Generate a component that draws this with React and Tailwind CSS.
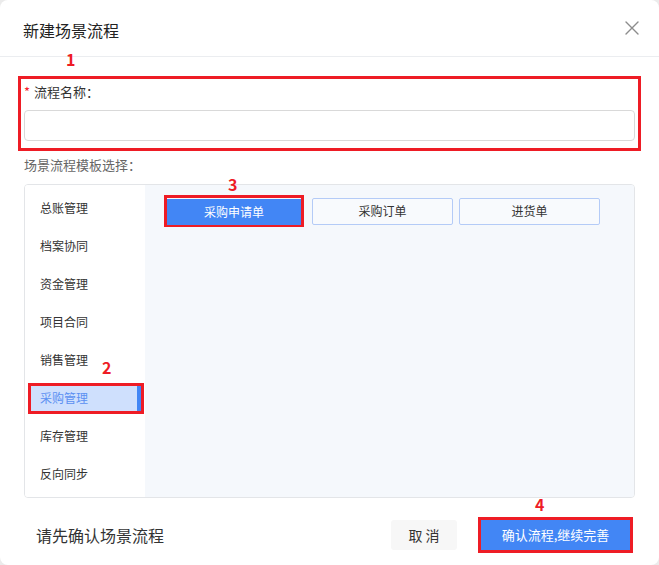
import React, { useState } from 'react';

const menus = ['总账管理', '档案协同', '资金管理', '项目合同', '销售管理', '采购管理', '库存管理', '反向同步'];
const templates = ['采购申请单', '采购订单', '进货单'];

function Mark({ n, className }) {
  return (
    <span className={`absolute text-[16px] leading-[20px] font-bold text-[#ee1c25] ${className}`}>{n}</span>
  );
}

function CloseIcon() {
  return (
    <svg width="14" height="14" viewBox="0 0 14 14" fill="none" stroke="#8c8c8c" strokeWidth="1.4" strokeLinecap="round">
      <path d="M1 1L13 13M13 1L1 13" />
    </svg>
  );
}

export default function App() {
  const [name, setName] = useState('');
  const [menu, setMenu] = useState('采购管理');
  const [tpl, setTpl] = useState('采购申请单');

  return (
    <div
      className="relative w-[659px] h-[565px] bg-[#ebebeb] text-[#333] [text-spacing-trim:space-all]"
      style={{ fontFamily: '"Noto Sans CJK SC", "Noto Sans", sans-serif' }}
    >
      <div className="flex flex-col h-full bg-white rounded-[8px] overflow-hidden">
        {/* header */}
        <div className="h-[57px] flex items-center justify-between pl-[23px] pr-[15px] border-b border-[#ebedf0]">
          <span className="text-[16px] leading-[22px] pt-[4px] text-[#222]">新建场景流程</span>
          <button className="w-[24px] h-[24px] flex items-center justify-center">
            <CloseIcon />
          </button>
        </div>

        {/* flow name */}
        <div className="mt-[19px] ml-[18px] w-[623px] border-[3px] border-[#ee1c25] pl-[3px] pr-[3px] pt-[4px] pb-[7px]">
          <div className="h-[18px] flex items-center text-[13px] leading-[18px] text-[#333]">
            <span className="text-[#f5222d] mr-[4px] text-[13px]">*</span>流程名称：
          </div>
          <input
            className="mt-[9px] w-full h-[31px] border border-[#d9d9d9] rounded-[4px] px-[10px] text-[13px] outline-none"
            value={name}
            onChange={(e) => setName(e.target.value)}
          />
        </div>

        <div className="mt-[6px] ml-[24px] h-[16px] leading-[16px] text-[13px] text-[#666]">场景流程模板选择：</div>

        {/* template panel */}
        <div className="mt-[11px] ml-[24px] w-[611px] h-[314px] flex border border-[#e3e5e8] rounded-[4px] overflow-hidden">
          <div className="w-[120px] bg-white pt-[4px] flex flex-col">
            {menus.map((m) =>
              m === menu ? (
                <div key={m} className="h-[38px] flex items-center">
                  <div className="ml-[3px] w-[116px] h-[31px] border-[3px] border-[#ee1c25]">
                    <div className="h-full flex items-center pl-[9px] bg-[#cfe0fd] border-r-[4px] border-[#4286f5] text-[12px] text-[#5b90f2]">
                      {m}
                    </div>
                  </div>
                </div>
              ) : (
                <div
                  key={m}
                  onClick={() => setMenu(m)}
                  className="h-[38px] flex items-center pl-[15px] text-[12px] text-[#333] cursor-pointer"
                >
                  {m}
                </div>
              )
            )}
          </div>
          <div className="flex-1 bg-[#f5f8fc] pl-[19px] pt-[10px]">
            <div className="flex items-center">
              {templates.map((t, i) =>
                t === tpl ? (
                  <div key={t} className="w-[140px] h-[32px] border-[3px] border-[#ee1c25] mr-[8px]">
                    <button className="w-full h-full bg-[#4286f5] text-white text-[12px]">{t}</button>
                  </div>
                ) : (
                  <button
                    key={t}
                    onClick={() => setTpl(t)}
                    className={`w-[141px] h-[27px] border border-[#b4cbf7] rounded-[2px] text-[12px] text-[#333] bg-[#f8fafd] ${i === 1 ? 'mr-[6px]' : ''}`}
                  >
                    {t}
                  </button>
                )
              )}
            </div>
          </div>
        </div>

        {/* footer */}
        <div className="mt-[19px] h-[36px] flex items-center pl-[36px] pr-[26px]">
          <span className="text-[16px] text-[#333] flex-1">请先确认场景流程</span>
          <button className="w-[66px] h-[30px] bg-[#f7f7f7] rounded-[3px] text-[14px] text-[#333]">取 消</button>
          <div className="ml-[21px] w-[155px] h-[36px] border-[3px] border-[#ee1c25]">
            <button className="w-full h-full bg-[#4286f5] text-white text-[13px]">确认流程,继续完善</button>
          </div>
        </div>
      </div>

      <Mark n="1" className="left-[66px] top-[49px]" />
      <Mark n="2" className="left-[102px] top-[357px]" />
      <Mark n="3" className="left-[228px] top-[174px]" />
      <Mark n="4" className="left-[535px] top-[494px]" />
    </div>
  );
}
